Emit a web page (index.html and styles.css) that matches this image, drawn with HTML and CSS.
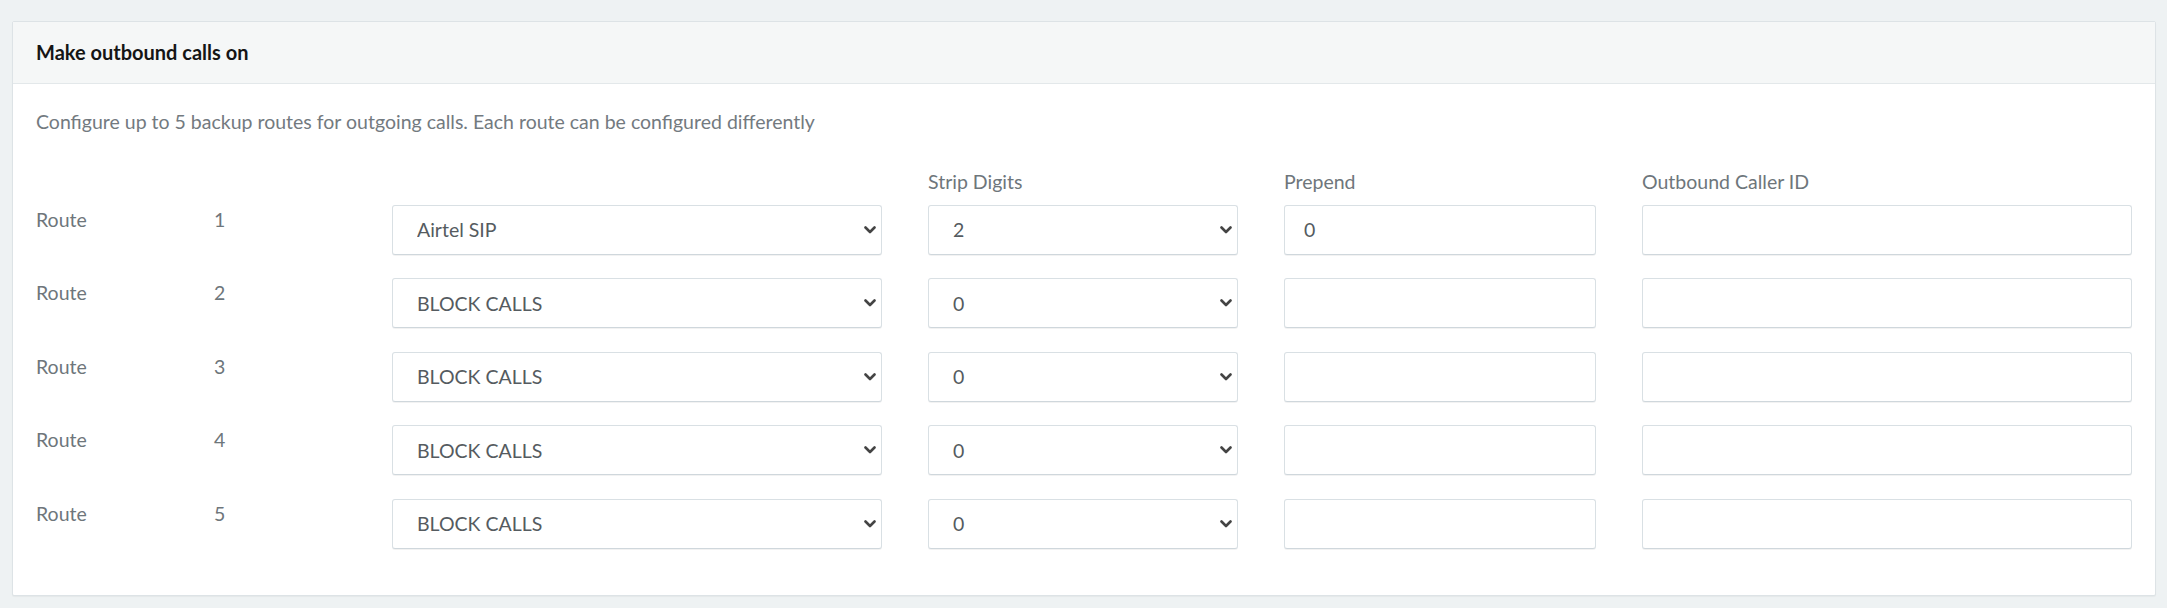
FILE: index.html
```html
<!DOCTYPE html>
<html lang="en">
<head>
<meta charset="utf-8">
<title>Make outbound calls on</title>
<link rel="stylesheet" href="styles.css">
</head>
<body>
<div class="page">
  <section class="card">
    <header class="card-header">
      <h2 class="card-title">Make outbound calls on</h2>
    </header>
    <div class="card-body">
      <p class="desc">Configure up to 5 backup routes for outgoing calls. Each route can be configured differently</p>
      <div class="routes">
        <div class="col-head"></div>
        <div class="col-head"></div>
        <div class="col-head"></div>
        <div class="col-head">Strip Digits</div>
        <div class="col-head">Prepend</div>
        <div class="col-head">Outbound Caller ID</div>

        <div class="lbl">Route</div>
        <div class="lbl">1</div>
        <div class="sel"><select class="ctl"><option>Airtel SIP</option></select><svg class="chev" viewBox="0 0 12 8"><polyline points="1.5,1.5 6,6 10.5,1.5"/></svg></div>
        <div class="sel"><select class="ctl"><option>2</option></select><svg class="chev" viewBox="0 0 12 8"><polyline points="1.5,1.5 6,6 10.5,1.5"/></svg></div>
        <input class="ctl inp" type="text" value="0">
        <input class="ctl inp" type="text" value="">

        <div class="lbl">Route</div>
        <div class="lbl">2</div>
        <div class="sel"><select class="ctl"><option>BLOCK CALLS</option></select><svg class="chev" viewBox="0 0 12 8"><polyline points="1.5,1.5 6,6 10.5,1.5"/></svg></div>
        <div class="sel"><select class="ctl"><option>0</option></select><svg class="chev" viewBox="0 0 12 8"><polyline points="1.5,1.5 6,6 10.5,1.5"/></svg></div>
        <input class="ctl inp" type="text" value="">
        <input class="ctl inp" type="text" value="">

        <div class="lbl">Route</div>
        <div class="lbl">3</div>
        <div class="sel"><select class="ctl"><option>BLOCK CALLS</option></select><svg class="chev" viewBox="0 0 12 8"><polyline points="1.5,1.5 6,6 10.5,1.5"/></svg></div>
        <div class="sel"><select class="ctl"><option>0</option></select><svg class="chev" viewBox="0 0 12 8"><polyline points="1.5,1.5 6,6 10.5,1.5"/></svg></div>
        <input class="ctl inp" type="text" value="">
        <input class="ctl inp" type="text" value="">

        <div class="lbl">Route</div>
        <div class="lbl">4</div>
        <div class="sel"><select class="ctl"><option>BLOCK CALLS</option></select><svg class="chev" viewBox="0 0 12 8"><polyline points="1.5,1.5 6,6 10.5,1.5"/></svg></div>
        <div class="sel"><select class="ctl"><option>0</option></select><svg class="chev" viewBox="0 0 12 8"><polyline points="1.5,1.5 6,6 10.5,1.5"/></svg></div>
        <input class="ctl inp" type="text" value="">
        <input class="ctl inp" type="text" value="">

        <div class="lbl">Route</div>
        <div class="lbl">5</div>
        <div class="sel"><select class="ctl"><option>BLOCK CALLS</option></select><svg class="chev" viewBox="0 0 12 8"><polyline points="1.5,1.5 6,6 10.5,1.5"/></svg></div>
        <div class="sel"><select class="ctl"><option>0</option></select><svg class="chev" viewBox="0 0 12 8"><polyline points="1.5,1.5 6,6 10.5,1.5"/></svg></div>
        <input class="ctl inp" type="text" value="">
        <input class="ctl inp" type="text" value="">
      </div>
    </div>
  </section>
</div>
</body>
</html>
```
FILE: styles.css
```css
* { box-sizing: border-box; }
html, body { margin: 0; padding: 0; }
body {
  background: #eef2f3;
  font-family: "Lato", "Liberation Sans", sans-serif;
  font-size: 19.5px;
  color: #6e767b;
}
.page { padding: 21px 11px 12px 12px; }
.card {
  background: #fff;
  border: 1px solid #dde3e6;
  border-radius: 2px;
  box-shadow: 0 1px 1px rgba(0,0,0,0.04);
}
.card-header {
  background: #f5f7f7;
  border-bottom: 1px solid #e3e8ea;
  padding: 15px 23px 16px 23px;
}
.card-title {
  margin: 0;
  font-size: 20px;
  line-height: 30px;
  font-weight: 700;
  color: #151515;
}
.card-body { padding: 23px 23px 46px 23px; }
.desc {
  margin: 0 0 30px 0;
  line-height: 30px;
  color: #737a7f;
}
.routes {
  display: grid;
  grid-template-columns: 132px 132px 490px 310px 312px 490px;
  column-gap: 46px;
  row-gap: 23.5px;
}
.col-head {
  line-height: 30px;
  color: #6e767b;
  margin-bottom: -16px;
}
.lbl {
  line-height: 30px;
  color: #6e767b;
}
.sel { position: relative; }
.ctl {
  display: block;
  width: 100%;
  height: 50px;
  margin: 0;
  background: #fff;
  border: 1px solid #d9e0e4;
  border-bottom-color: #cfd7dc;
  border-radius: 3px;
  box-shadow: 0 1px 0 rgba(0,0,0,0.05);
  font-family: "Lato", "Liberation Sans", sans-serif;
  font-size: 19.5px;
  color: #555b60;
  outline: none;
}
select.ctl {
  -webkit-appearance: none;
  appearance: none;
  padding: 0 30px 0 24px;
}
.inp { padding: 0 19px; }
.chev {
  position: absolute;
  right: 6px;
  top: 21px;
  width: 12px;
  height: 8px;
  fill: none;
  stroke: #444;
  stroke-width: 2.6;
  stroke-linecap: round;
  stroke-linejoin: round;
  pointer-events: none;
}
```
